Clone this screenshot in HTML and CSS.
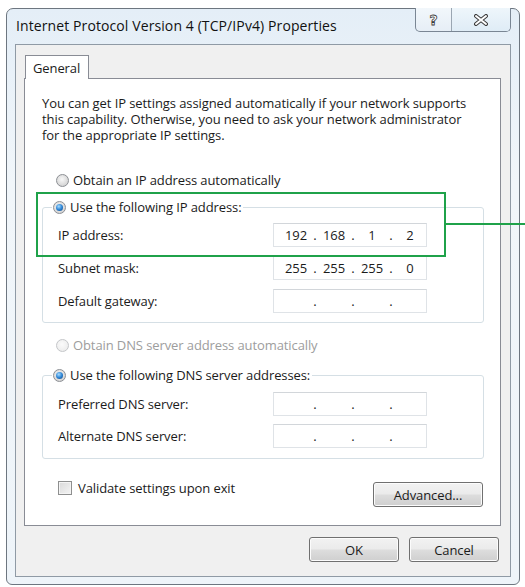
FILE: index.html
```html
<!DOCTYPE html>
<html lang="en">
<head>
    <meta charset="UTF-8">
    <title>Internet Protocol Version 4 (TCP/IPv4) Properties</title>
    <link rel="stylesheet" href="styles.css">
</head>
<body>
    <div class="window">
        <div class="titlebar">
            <span class="title">Internet Protocol Version 4 (TCP/IPv4) Properties</span>
            <div class="caption-buttons">
                <div class="cap help">?</div>
                <div class="cap close">
                    <svg width="16" height="12" viewBox="0 0 16 12">
                        <path d="M3 2 L13 10 M13 2 L3 10" stroke="#3c3c3c" stroke-width="4" stroke-linecap="round"/>
                        <path d="M3 2 L13 10 M13 2 L3 10" stroke="#ffffff" stroke-width="2" stroke-linecap="round"/>
                    </svg>
                </div>
            </div>
        </div>

        <div class="client">
            <div class="tabs">
                <div class="tab">General</div>
            </div>
            <div class="panel">
                <p class="intro">
                    You can get IP settings assigned automatically if your network supports<br>
                    this capability. Otherwise, you need to ask your network administrator<br>
                    for the appropriate IP settings.
                </p>

                <div class="option first"><span class="radio"></span>Obtain an IP address automatically</div>

                <fieldset class="group ip-group">
                    <legend><span class="option"><span class="radio checked"></span>Use the following IP address:</span></legend>
                    <div class="field-row">
                        <span>IP address:</span>
                        <div class="ip-box">
                            <span class="octet">192</span><span class="dot">.</span><span class="octet">168</span><span class="dot">.</span><span class="octet">1</span><span class="dot">.</span><span class="octet">2</span>
                        </div>
                    </div>
                    <div class="field-row">
                        <span>Subnet mask:</span>
                        <div class="ip-box">
                            <span class="octet">255</span><span class="dot">.</span><span class="octet">255</span><span class="dot">.</span><span class="octet">255</span><span class="dot">.</span><span class="octet">0</span>
                        </div>
                    </div>
                    <div class="field-row">
                        <span>Default gateway:</span>
                        <div class="ip-box">
                            <span class="octet"></span><span class="dot">.</span><span class="octet"></span><span class="dot">.</span><span class="octet"></span><span class="dot">.</span><span class="octet"></span>
                        </div>
                    </div>
                </fieldset>

                <div class="option disabled dns-auto"><span class="radio"></span>Obtain DNS server address automatically</div>

                <fieldset class="group dns-group">
                    <legend><span class="option"><span class="radio checked"></span>Use the following DNS server addresses:</span></legend>
                    <div class="field-row">
                        <span>Preferred DNS server:</span>
                        <div class="ip-box">
                            <span class="octet"></span><span class="dot">.</span><span class="octet"></span><span class="dot">.</span><span class="octet"></span><span class="dot">.</span><span class="octet"></span>
                        </div>
                    </div>
                    <div class="field-row">
                        <span>Alternate DNS server:</span>
                        <div class="ip-box">
                            <span class="octet"></span><span class="dot">.</span><span class="octet"></span><span class="dot">.</span><span class="octet"></span><span class="dot">.</span><span class="octet"></span>
                        </div>
                    </div>
                </fieldset>

                <div class="panel-footer">
                    <div class="check-option"><span class="checkbox"></span>Validate settings upon exit</div>
                    <button class="button advanced">Advanced...</button>
                </div>
            </div>

            <div class="dialog-buttons">
                <button class="button">OK</button>
                <button class="button">Cancel</button>
            </div>
        </div>
    </div>

    <div class="callout"></div>
</body>
</html>
```

FILE: styles.css
```css
body {
    margin: 0;
    background: #ffffff;
    font-family: 'Open Sans', 'Noto Sans', sans-serif;
    font-size: 13px;
    color: #1b1b1b;
    position: relative;
    height: 587px;
    overflow: hidden;
}
.window {
    box-sizing: border-box;
    width: 514px;
    height: 577px;
    margin: 8px 0 0 6px;
    padding: 0 8px 7px 8px;
    border: 1px solid #6d7680;
    border-radius: 7px 7px 6px 6px;
    background: linear-gradient(to bottom, #e4eef7, #f1f6fa 30%, #eef4f9);
    display: flex;
    flex-direction: column;
}
.titlebar {
    height: 35px;
    display: flex;
    align-items: flex-start;
}
.title {
    margin: 8px 0 0 1px;
    font-size: 14px;
    line-height: 18px;
    letter-spacing: 0.1px;
    color: #111;
}
.caption-buttons {
    margin: -1px 0 0 auto;
    display: flex;
    height: 23px;
    border: 1px solid #7a8694;
    border-top: none;
    border-radius: 0 0 5px 5px;
    background: linear-gradient(to bottom, #f2f7fb, #e6eef6);
    overflow: hidden;
}
.cap {
    display: flex;
    align-items: center;
    justify-content: center;
}
.help {
    width: 35px;
    border-right: 1px solid #9aa6b2;
    font-family: 'DejaVu Sans', sans-serif;
    font-weight: bold;
    font-size: 14px;
    color: #ffffff;
    -webkit-text-stroke: 0.8px #3c3c3c;
}
.close {
    width: 58px;
    background: linear-gradient(to bottom, #eef6fb, #dfecf6);
}
.client {
    flex: 1;
    border: 1px solid #8f9aa5;
    background: #f0f0f0;
    padding: 10px 9px 14px 8px;
}
.tabs {
    display: flex;
    padding-left: 1px;
}
.tab {
    position: relative;
    height: 24px;
    margin-bottom: -1px;
    padding: 0 8px 0 7px;
    border: 1px solid #898c95;
    border-bottom: none;
    background: #ffffff;
    line-height: 24px;
    letter-spacing: -0.1px;
    box-sizing: border-box;
}
.panel {
    border: 1px solid #898c95;
    background: #ffffff;
    padding: 16px 16px 18px 17px;
}
.intro {
    margin: 0;
    line-height: 16px;
    letter-spacing: -0.08px;
    white-space: nowrap;
}
.option {
    display: flex;
    align-items: center;
    height: 16px;
    letter-spacing: -0.1px;
    white-space: nowrap;
}
.option.first {
    margin: 29px 0 0 14px;
}
.option.disabled {
    color: #9d9d9d;
}
.dns-auto {
    margin: 14px 0 0 14px;
}
.radio {
    box-sizing: border-box;
    width: 13px;
    height: 13px;
    margin-right: 4px;
    border-radius: 50%;
    border: 1px solid #8c8f94;
    background: radial-gradient(circle at 45% 40%, #f8f8f8, #d6d6d6 70%, #c9c9c9);
    display: flex;
    align-items: center;
    justify-content: center;
    flex: none;
}
.disabled .radio {
    border-color: #c4c6c9;
    background: radial-gradient(circle at 45% 40%, #fbfbfb, #e8e8e8);
}
.radio.checked::after {
    content: "";
    width: 7px;
    height: 7px;
    border-radius: 50%;
    background: radial-gradient(circle at 40% 35%, #a6dcff, #2f86d6 50%, #0c3f7a);
}
.group {
    margin: 11px 0 0 0;
    padding: 0 0 9px 0;
    border: 1px solid #d5dfe5;
    border-radius: 3px;
    min-width: 0;
}
.group legend {
    margin-left: 9px;
    padding: 0 2px 0 1px;
}
.dns-group {
    margin-top: 14px;
    padding-bottom: 10px;
}
.field-row {
    display: grid;
    grid-template-columns: 215px 154px;
    align-items: center;
    height: 24px;
    padding-left: 15px;
    margin-top: 9px;
    letter-spacing: -0.1px;
}
.ip-group .field-row:first-of-type {
    margin-top: 8px;
}
.dns-group .field-row {
    margin-top: 8px;
}
.dns-group .field-row:first-of-type {
    margin-top: 9px;
}
.ip-box {
    box-sizing: border-box;
    height: 24px;
    display: flex;
    align-items: center;
    padding-left: 7px;
    border: 1px solid #dfe3e7;
    border-top-color: #d2d6da;
    background: #ffffff;
}
.octet {
    width: 30px;
    text-align: center;
}
.dot {
    width: 8px;
    text-align: center;
}
.panel-footer {
    display: flex;
    align-items: flex-start;
    justify-content: space-between;
    margin: 22px 1px 0 0;
}
.check-option {
    display: flex;
    align-items: center;
    height: 16px;
    margin: -1px 0 0 16px;
    letter-spacing: -0.1px;
}
.checkbox {
    box-sizing: border-box;
    width: 14px;
    height: 14px;
    margin-right: 6px;
    border: 1px solid #8e8f8f;
    background: linear-gradient(135deg, #d9d9d9, #f4f4f4);
    box-shadow: inset 0 0 0 1px #f4f4f4;
}
.button {
    box-sizing: border-box;
    height: 25px;
    border: 1px solid #707070;
    border-radius: 3px;
    background: linear-gradient(to bottom, #f2f2f2 0%, #ebebeb 48%, #dddddd 52%, #cfcfcf 100%);
    box-shadow: inset 0 0 0 1px #fcfcfc;
    font-family: inherit;
    font-size: 13px;
    letter-spacing: -0.1px;
    color: #1b1b1b;
    padding: 0;
}
.advanced {
    width: 110px;
    margin-top: 1px;
}
.dialog-buttons {
    display: flex;
    justify-content: flex-end;
    gap: 10px;
    margin: 11px 2px 0 0;
}
.dialog-buttons .button {
    width: 90px;
}
.callout {
    position: absolute;
    left: 36px;
    top: 192px;
    width: 410px;
    height: 65px;
    box-sizing: border-box;
    border: 2px solid #1fa24a;
}
.callout::after {
    content: "";
    position: absolute;
    left: 100%;
    top: 29px;
    width: 90px;
    height: 2px;
    background: #1fa24a;
}
```
